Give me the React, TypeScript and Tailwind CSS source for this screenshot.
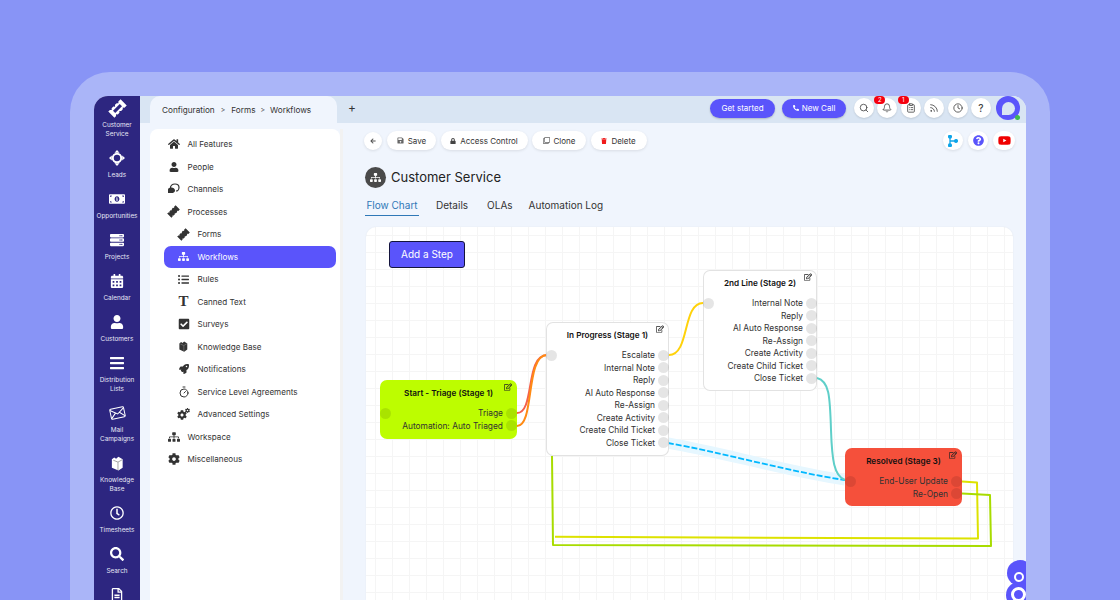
import React from "react";
import {
  FaHome, FaUser, FaSitemap, FaListUl, FaCheckSquare, FaRocket, FaCog,
  FaBars, FaRegClock, FaSearch, FaRegFileAlt, FaCalendarAlt, FaServer, FaMoneyBillAlt,
  FaRegEdit, FaArrowLeft, FaSave, FaLock, FaRegClone, FaTrash, FaPhoneAlt, FaQuestionCircle, FaYoutube,
} from "react-icons/fa";
import { Search, Bell, ClipboardList, Rss, Clock, Timer } from "lucide-react";

function Ticket({ size, slits }: { size: number; slits?: boolean }) {
  return (
    <svg width={size} height={size} viewBox="0 0 24 24" className="-rotate-45" fill="currentColor">
      <path d="M1 6.500h3l1.500 1.700L7 6.500h3l1.500 1.700L13 6.500h3l1.500 1.700L19 6.500h4v11h-4l-1.500-1.700-1.500 1.700h-3l-1.500-1.700-1.500 1.700H7l-1.500-1.700L4 17.500H1z" />
      {slits && <path d="M6 10h12v4H6z" fill="#2d2680" />}
    </svg>
  );
}

function LeadsIcon() {
  return (
    <svg width="16" height="16" viewBox="0 0 16 16" fill="white">
      <path d="M8 0l2.500 2.800h-5zM8 16l-2.500-2.800h5zM0 8l2.800-2.500v5zM16 8l-2.800 2.500v-5z" />
      <circle cx="8" cy="8" r="4.200" fill="none" stroke="white" strokeWidth="2" />
    </svg>
  );
}

function MailIcon() {
  return (
    <svg width="17" height="14" viewBox="0 0 17 14" fill="none" stroke="white" strokeWidth="1" className="-rotate-12">
      <rect x="1.500" y="2" width="14" height="10" rx="1" />
      <path d="M1.500 3l7 5 7-5M1.500 11.500l5-4.800M15.500 11.500l-5-4.800" />
    </svg>
  );
}

function BooksIcon({ size }: { size: number }) {
  return (
    <svg width={size} height={size} viewBox="0 0 16 16" fill="currentColor">
      <path d="M2 3.500 4.500 1.500 6.500 3 9 .8l4.500 2.700v9L9 15.500 2 12.500z" />
      <path d="M8.500 6.500v8.500M3.500 4.500l5 2 4.500-2.500" fill="none" stroke="#888" strokeWidth="0.8" />
    </svg>
  );
}

function ChannelsIcon() {
  return (
    <svg width="13" height="12" viewBox="0 0 13 12" fill="none">
      <path d="M3.500 5.500C3 2.500 5.500 1 8 1s4 1.500 4 3.500S10.500 8 9 8" stroke="#333" strokeWidth="1.200" />
      <path d="M1 6.500C1 5 3 4.500 4.500 4.500S8 5.500 8 7.500 6 10 4.500 10H1z" fill="#333" />
    </svg>
  );
}

function CogsIcon() {
  return (
    <span className="relative block h-[12px] w-[13px]">
      <FaCog size={10} className="absolute bottom-0 left-0" />
      <FaCog size={5} className="absolute right-0 top-0" />
    </span>
  );
}

const side: [React.ReactNode, string[]][] = [
  [<Ticket size={19} slits />, ["Customer", "Service"]],
  [<LeadsIcon />, ["Leads"]],
  [<FaMoneyBillAlt size={16} />, ["Opportunities"]],
  [<FaServer size={14} />, ["Projects"]],
  [<FaCalendarAlt size={14} />, ["Calendar"]],
  [<FaUser size={14} />, ["Customers"]],
  [<FaBars size={16} />, ["Distribution", "Lists"]],
  [<MailIcon />, ["Mail", "Campaigns"]],
  [<BooksIcon size={15} />, ["Knowledge", "Base"]],
  [<FaRegClock size={14} />, ["Timesheets"]],
  [<FaSearch size={14} />, ["Search"]],
  [<FaRegFileAlt size={14} />, []],
];

const tree: { icon: React.ReactNode; label: string; sub?: boolean; active?: boolean }[] = [
  { icon: <FaHome size={12} />, label: "All Features" },
  { icon: <FaUser size={10} />, label: "People" },
  { icon: <ChannelsIcon />, label: "Channels" },
  { icon: <Ticket size={15} />, label: "Processes" },
  { icon: <Ticket size={15} />, label: "Forms", sub: true },
  { icon: <FaSitemap size={11} />, label: "Workflows", sub: true, active: true },
  { icon: <FaListUl size={11} />, label: "Rules", sub: true },
  { icon: <span className="font-['Liberation_Serif'] text-[15px] font-bold leading-none">T</span>, label: "Canned Text", sub: true },
  { icon: <FaCheckSquare size={12} />, label: "Surveys", sub: true },
  { icon: <BooksIcon size={11} />, label: "Knowledge Base", sub: true },
  { icon: <FaRocket size={10} />, label: "Notifications", sub: true },
  { icon: <Timer size={12} />, label: "Service Level Agreements", sub: true },
  { icon: <CogsIcon />, label: "Advanced Settings", sub: true },
  { icon: <FaSitemap size={12} />, label: "Workspace" },
  { icon: <FaCog size={12} />, label: "Miscellaneous" },
];

function Round({ children, badge }: { children: React.ReactNode; badge?: string }) {
  return (
    <div className="relative flex h-[20px] w-[20px] items-center justify-center rounded-full bg-white text-[#444] shadow-[0_1px_2px_rgba(0,0,0,0.12)]">
      {children}
      {badge && (
        <span className="absolute -left-[3px] -top-[2px] flex h-[8px] w-[11px] items-center justify-center rounded-full bg-[#f5000f] text-[6px] leading-none text-white">
          {badge}
        </span>
      )}
    </div>
  );
}

function Act({ icon, label, w }: { icon: React.ReactNode; label: string; w: string }) {
  return (
    <button className={`flex h-[19px] items-center justify-center gap-[4px] rounded-full bg-white text-[8px] text-[#333] shadow-[0_1px_3px_rgba(0,0,0,0.1)] ${w}`}>
      {icon}
      {label}
    </button>
  );
}

function Node({ pos, bg, title, rows, titleH, inH }: { pos: string; bg: string; title: string; rows: string[]; titleH: string; inH: string }) {
  return (
    <div className={`absolute rounded-[7px] ${bg} ${pos}`}>
      <FaRegEdit size={8} className="absolute right-[5px] top-[3px] text-[#222]" />
      <div className={`flex items-center justify-center text-[8.2px] font-semibold text-[#111] ${titleH}`}>{title}</div>
      <div className={`absolute left-[0px] h-[11px] w-[11px] rounded-full bg-black/10 ${inH}`} />
      {rows.map((r) => (
        <div key={r} className="flex h-[12.5px] items-center justify-end gap-[3px] text-[8.4px] text-[#333]">
          <span className="pt-[1px]">{r}</span>
          <span className="h-[11px] w-[11px] shrink-0 rounded-full bg-black/10" />
        </div>
      ))}
    </div>
  );
}

export default function App() {
  return (
    <div className="h-[600px] w-[1120px] overflow-hidden bg-[#8894f6] px-[70px] pt-[72px] font-['Inter',sans-serif]">
      <div className="h-[528px] overflow-hidden rounded-t-[40px] bg-[#aab5f8] px-[24px] pt-[24px]">
        <div className="flex h-[504px] overflow-hidden rounded-t-[14px] bg-[#f0f5fd]">
          {/* Sidebar */}
          <aside className="flex w-[46px] shrink-0 flex-col items-center bg-[#2d2680] pt-[3px] text-white">
            {side.map(([ic, lines], i) => (
              <div key={i} className="flex w-full shrink-0 flex-col items-center pb-[10.500px]">
                <div className="flex h-[18px] items-center justify-center">{ic}</div>
                <div className="mt-[3.500px] flex flex-col items-center whitespace-nowrap text-[6.4px] leading-[9px] text-[#e6e6f5]">
                  {lines.map((l) => <span key={l}>{l}</span>)}
                </div>
              </div>
            ))}
          </aside>

          <div className="flex min-w-0 flex-1 flex-col">
            {/* Top bar */}
            <header className="flex h-[27px] shrink-0 items-center bg-[#d9e5f3] pl-[10px] pr-[6px]">
              <div className="flex h-full w-[187px] items-center rounded-t-[10px] bg-[#f0f5fd] pl-[12px] pt-[1px] text-[8.2px] text-[#333]">
                <span>Configuration</span><span className="mx-[6px] text-[7px]">&gt;</span><span>Forms</span><span className="mx-[5px] text-[7px]">&gt;</span><span>Workflows</span>
              </div>
              <span className="mb-[3px] ml-[11px] text-[12px] leading-none text-[#333]">+</span>
              <div className="mb-[3px] ml-auto flex items-center">
                <button className="h-[19px] w-[65px] rounded-full bg-[#5a54fb] text-[8px] text-white shadow-[0_1px_2px_rgba(0,0,0,0.2)]">Get started</button>
                <button className="ml-[7px] flex h-[19px] w-[64px] items-center justify-center gap-[3px] rounded-full bg-[#5a54fb] text-[8px] text-white shadow-[0_1px_2px_rgba(0,0,0,0.2)]">
                  <FaPhoneAlt size={6} />New Call
                </button>
                <div className="ml-[8px] flex items-center gap-[3.4px]">
                  <Round><Search size={10} /></Round>
                  <Round badge="2"><Bell size={10} /></Round>
                  <Round badge="1"><ClipboardList size={10} /></Round>
                  <Round><Rss size={10} /></Round>
                  <Round><Clock size={10} /></Round>
                  <Round><span className="text-[10px] font-medium leading-none">?</span></Round>
                </div>
                <div className="relative ml-[5px] flex h-[24px] w-[24px] items-center justify-center rounded-full bg-[#5a54fb]">
                  <div className="h-[13px] w-[13px] rounded-full rounded-bl-[2px] bg-[#d9e5f3]" />
                  <span className="absolute bottom-0 right-0 h-[5px] w-[5px] rounded-full bg-[#3fb950]" />
                </div>
              </div>
            </header>

            <div className="flex min-h-0 flex-1">
              {/* Tree */}
              <nav className="ml-[10px] mt-[6px] flex w-[193px] shrink-0 border-r-[3px] border-[#f2f2f2]">
                <div className="w-[190px] rounded-t-[8px] bg-white pl-[14px] pr-[4px] pt-[4px]">
                  {tree.map((t) => (
                    <div
                      key={t.label}
                      className={`flex h-[22.5px] items-center rounded-[7px] text-[8.1px] ${t.active ? "bg-[#5a54fb] text-white" : "text-[#333]"} ${t.sub ? "pl-[13px]" : "pl-[3px]"}`}
                    >
                      <span className={`flex w-[13px] justify-center ${t.active ? "text-white" : "text-[#333]"}`}>{t.icon}</span>
                      <span className="ml-[7.5px]">{t.label}</span>
                    </div>
                  ))}
                </div>
              </nav>

              {/* Content */}
              <main className="flex min-w-0 flex-1 flex-col pl-[21px] pr-[13px] pt-[8px]">
                <div className="flex items-center">
                  <div className="flex h-[18px] w-[18px] items-center justify-center rounded-full bg-white text-[#555] shadow-[0_1px_3px_rgba(0,0,0,0.1)]">
                    <FaArrowLeft size={6} />
                  </div>
                  <div className="ml-[5px] flex items-center gap-[4.5px]">
                    <Act w="w-[49px]" icon={<FaSave size={7} className="text-[#666]" />} label="Save" />
                    <Act w="w-[87px]" icon={<FaLock size={6} className="text-[#444]" />} label="Access Control" />
                    <Act w="w-[54px]" icon={<FaRegClone size={7} className="text-[#666]" />} label="Clone" />
                    <Act w="w-[56px]" icon={<FaTrash size={6} className="text-[#f01b1b]" />} label="Delete" />
                  </div>
                  <div className="-mr-[2px] ml-auto flex items-center gap-[5px]">
                    <div className="flex h-[19px] w-[20px] items-center justify-center rounded-full bg-white shadow-[0_1px_3px_rgba(0,0,0,0.1)]">
                      <svg width="10" height="12" viewBox="0 0 10 12" fill="none" stroke="#0ea5e9" strokeWidth="1.3">
                        <path d="M2 2v8M2 6c2 0 3 0 6 0" />
                        <circle cx="2" cy="1.7" r="1.4" fill="#0ea5e9" /><circle cx="2" cy="10.3" r="1.4" fill="#0ea5e9" /><circle cx="8" cy="6" r="1.4" fill="#0ea5e9" />
                      </svg>
                    </div>
                    <div className="flex h-[19px] w-[20px] items-center justify-center rounded-full bg-white shadow-[0_1px_3px_rgba(0,0,0,0.1)]">
                      <FaQuestionCircle size={11} className="text-[#5a54fb]" />
                    </div>
                    <div className="flex h-[19px] w-[22px] items-center justify-center rounded-full bg-white shadow-[0_1px_3px_rgba(0,0,0,0.1)]">
                      <FaYoutube size={13} className="text-[#f00000]" />
                    </div>
                  </div>
                </div>

                <div className="mt-[17px] flex items-center gap-[5px] pl-[1px]">
                  <div className="flex h-[21px] w-[21px] items-center justify-center rounded-full bg-[#4a4a4a] text-white">
                    <FaSitemap size={11} />
                  </div>
                  <h1 className="text-[13px] font-normal leading-none text-[#222]">Customer Service</h1>
                </div>

                <div className="mt-[7px] flex h-[21px] pl-[1px] text-[10px]">
                  <div className="flex h-[21px] w-[54px] items-center justify-center border-b-[1.5px] border-[#2f78b7] text-[#2f78b7]">Flow Chart</div>
                  <div className="ml-[17px] flex items-center text-[#333]">Details</div>
                  <div className="ml-[19px] flex items-center text-[#333]">OLAs</div>
                  <div className="ml-[16px] flex items-center text-[#333]">Automation Log</div>
                </div>

                {/* Canvas */}
                <section className="relative ml-[2px] mt-[11px] min-h-0 flex-1 rounded-t-[10px] bg-white bg-[linear-gradient(#f5f5f5_1px,transparent_1px),linear-gradient(90deg,#f5f5f5_1px,transparent_1px)] bg-[size:17px_17px] bg-[position:9px_8px] shadow-[0_0_2px_rgba(0,0,0,0.06)]">
                  <button className="absolute left-[23px] top-[14px] h-[27px] w-[76px] rounded-[3px] border border-[#14143c] bg-[#5a54fb] text-[10px] text-white">Add a Step</button>

                  <svg className="absolute inset-0 h-[373px] w-[647px]" viewBox="366 227 647 373" fill="none">
                    <path d="M668,443 C720,452 790,472 845,480" stroke="#e6f7ff" strokeWidth="11" />
                    <path d="M668,443 C720,452 790,472 845,480" stroke="#00b8ff" strokeWidth="1.8" strokeDasharray="6 2" />
                    <path d="M517,413 C535,413 525,355 547,355" stroke="#f4604c" strokeWidth="2" />
                    <path d="M517,426 C535,426 525,355 547,355" stroke="#ff8a14" strokeWidth="2" />
                    <path d="M669,355 C690,355 682,303 703,303" stroke="#ffd20a" strokeWidth="2" />
                    <path d="M817,378 C829,381 830,395 831,430 C832,460 834,476 845,480" stroke="#5fcfc9" strokeWidth="2" />
                    <path d="M962,481.5 L977,482.5 L978,538.5 L555,536.8" stroke="#dde200" strokeWidth="2" strokeLinejoin="round" />
                    <path d="M962,493.5 L990,495 L991,546 L553,545 L552,456" stroke="#a8dc00" strokeWidth="2" strokeLinejoin="round" />
                  </svg>

                  <Node pos="left-[14px] top-[153px] h-[59px] w-[137px]" bg="bg-[#bdfd00]" title="Start - Triage (Stage 1)" titleH="h-[27px]" inH="top-[27.5px]" rows={["Triage", "Automation: Auto Triaged"]} />
                  <Node pos="left-[180px] top-[95px] h-[134px] w-[123px]" bg="bg-white shadow-[inset_0_0_0_1px_#e2e2e2]" title="In Progress (Stage 1)" titleH="h-[27px]" inH="top-[27.5px]" rows={["Escalate", "Internal Note", "Reply", "AI Auto Response", "Re-Assign", "Create Activity", "Create Child Ticket", "Close Ticket"]} />
                  <Node pos="left-[337px] top-[43px] h-[121px] w-[114px]" bg="bg-white shadow-[inset_0_0_0_1px_#e2e2e2]" title="2nd Line (Stage 2)" titleH="h-[27px]" inH="top-[27.5px]" rows={["Internal Note", "Reply", "AI Auto Response", "Re-Assign", "Create Activity", "Create Child Ticket", "Close Ticket"]} />
                  <Node pos="left-[479px] top-[221px] h-[58px] w-[117px]" bg="bg-[#f5503b]" title="Resolved (Stage 3)" titleH="h-[27px]" inH="top-[27.5px]" rows={["End-User Update", "Re-Open"]} />

                  <div className="absolute left-[641px] top-[333px] h-[26px] w-[26px] rounded-full bg-[#5a54fb]">
                    <div className="absolute left-[7px] top-[12px] h-[10px] w-[10px] rounded-full border-2 border-white" />
                  </div>
                  <div className="absolute left-[640px] top-[355px] h-[26px] w-[26px] rounded-full bg-[#5a54fb]">
                    <div className="absolute left-[5px] top-[5px] h-[15px] w-[15px] rounded-full border-[3px] border-white" />
                  </div>
                </section>
              </main>
            </div>
          </div>
        </div>
      </div>
    </div>
  );
}
